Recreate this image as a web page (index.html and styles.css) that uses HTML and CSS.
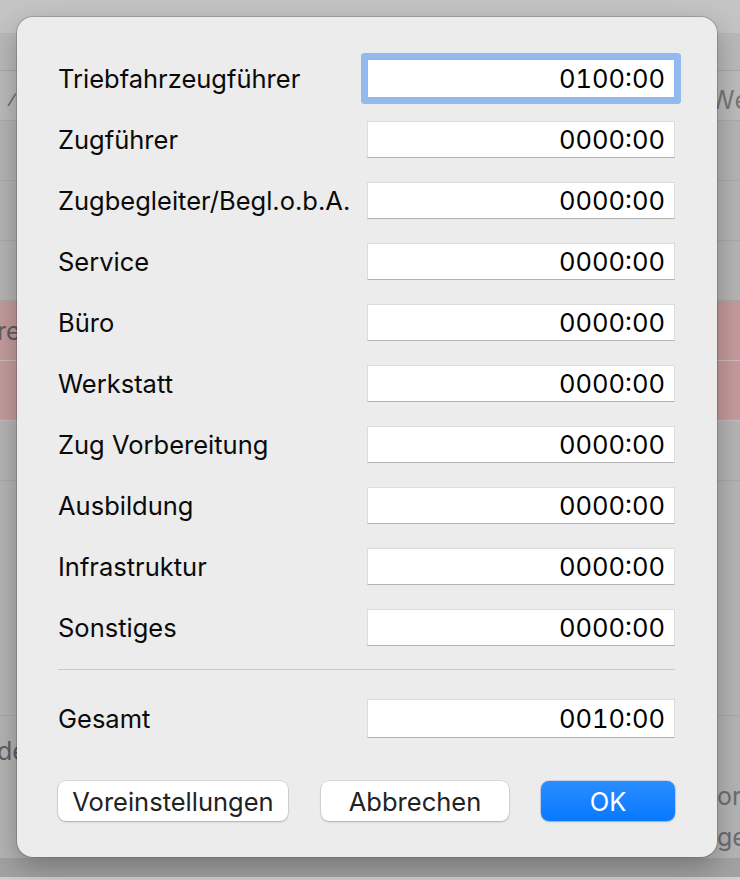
FILE: index.html
```html
<!DOCTYPE html>
<html lang="de">
<head>
<meta charset="utf-8">
<title>Zeiten</title>
<link rel="stylesheet" href="styles.css">
</head>
<body>
<div class="backdrop">
  <div class="bd-top"></div>
  <div class="bd-bar"></div>
  <div class="bd-head"><span class="bd-slash">∕</span><span class="bd-we">Wert</span></div>
  <div class="bd-row"></div>
  <div class="bd-row"></div>
  <div class="bd-row"></div>
  <div class="bd-row red"><span class="bd-left">re</span></div>
  <div class="bd-row red"></div>
  <div class="bd-row"></div>
  <div class="bd-fill"></div>
  <div class="bd-bottom">
    <div class="bd-line bd-l1"><span class="bd-left">de</span></div>
    <div class="bd-line bd-l2"><span class="bd-right">orm</span></div>
    <div class="bd-line bd-l3"><span class="bd-right">ge</span></div>
  </div>
  <div class="bd-foot"></div>
  <div class="bd-last"></div>
</div>

<div class="sheet">
  <div class="form">
    <div class="label">Triebfahrzeugführer</div>
    <div class="field focused">0100:00</div>
    <div class="label">Zugführer</div>
    <div class="field">0000:00</div>
    <div class="label">Zugbegleiter/Begl.o.b.A.</div>
    <div class="field">0000:00</div>
    <div class="label">Service</div>
    <div class="field">0000:00</div>
    <div class="label">Büro</div>
    <div class="field">0000:00</div>
    <div class="label">Werkstatt</div>
    <div class="field">0000:00</div>
    <div class="label">Zug Vorbereitung</div>
    <div class="field">0000:00</div>
    <div class="label">Ausbildung</div>
    <div class="field">0000:00</div>
    <div class="label">Infrastruktur</div>
    <div class="field">0000:00</div>
    <div class="label">Sonstiges</div>
    <div class="field">0000:00</div>
  </div>
  <div class="separator"></div>
  <div class="form total">
    <div class="label">Gesamt</div>
    <div class="field tall">0010:00</div>
  </div>
  <div class="buttons">
    <div class="btn btn-presets">Voreinstellungen</div>
    <div class="btn-group">
      <div class="btn btn-cancel">Abbrechen</div>
      <div class="btn btn-ok">OK</div>
    </div>
  </div>
</div>
</body>
</html>
```

FILE: styles.css
```css
* { box-sizing: border-box; }

html, body {
  margin: 0;
  padding: 0;
}

body {
  width: 740px;
  height: 880px;
  overflow: hidden;
  position: relative;
  font-family: Inter, "Noto Sans", "Liberation Sans", sans-serif;
  background: #b3b3b3;
}

/* ---------- backdrop window ---------- */
.backdrop {
  width: 740px;
  height: 880px;
  display: flex;
  flex-direction: column;
  background: #b4b4b4;
  color: #6a6a6a;
  font-size: 25px;
}

.bd-top { height: 33px; background: #c4c4c4; flex: none; }
.bd-bar { height: 38px; background: #b9b9b9; border-bottom: 1px solid #a9a9a9; flex: none; }
.bd-head {
  height: 50px;
  flex: none;
  background: #bbbbbb;
  border-bottom: 1px solid #aaaaaa;
  display: flex;
  justify-content: space-between;
  align-items: center;
  padding-top: 8px;
  overflow: hidden;
}
.bd-slash { margin-left: 11px; font-size: 18px; color: #555; }
.bd-we { margin-right: -30px; color: #777; letter-spacing: 1px; }

.bd-row {
  height: 60px;
  flex: none;
  border-bottom: 1px solid #a9a9a9;
  display: flex;
  align-items: center;
}
.bd-row.red {
  background: #c49b9c;
  border-bottom-color: #cbbcbc;
}
.bd-left { margin-left: -3px; color: #5f5f5f; }

.bd-fill { flex: 1; border-bottom: 1px solid #a8a8a8; }

.bd-bottom {
  height: 142px;
  flex: none;
  background: #b4b4b4;
  display: flex;
  flex-direction: column;
  overflow: hidden;
}
.bd-line { height: 30px; display: flex; align-items: center; }
.bd-l1 { margin-top: 20px; }
.bd-l2 { margin-top: 15px; }
.bd-l3 { margin-top: 11px; }
.bd-right { margin-left: 717px; color: #6d6d6d; white-space: nowrap; }

.bd-foot { height: 19px; flex: none; background: #a2a2a2; }
.bd-last { height: 3px; flex: none; background: #cfcfcf; }

/* ---------- sheet dialog ---------- */
.sheet {
  position: absolute;
  left: 17px;
  top: 17px;
  width: 700px;
  height: 840px;
  padding: 43px 42px 36px 41px;
  background: #ececec;
  border-radius: 16px;
  box-shadow: 0 0 0 1px rgba(0, 0, 0, 0.16), 0 10px 28px rgba(0, 0, 0, 0.28);
  display: flex;
  flex-direction: column;
  color: #111;
  font-size: 25.5px;
}

.form {
  display: grid;
  grid-template-columns: 1fr 308px;
  grid-auto-rows: 37px;
  row-gap: 24px;
  align-items: center;
}

.label {
  color: #0a0a0a;
  white-space: nowrap;
}

.field {
  height: 37px;
  background: #ffffff;
  border: 1px solid #dcdcdc;
  border-bottom-color: #b3b3b3;
  text-align: right;
  padding-right: 9px;
  display: flex;
  align-items: center;
  justify-content: flex-end;
  color: #000;
  font-variant-numeric: tabular-nums;
}

.field.focused {
  height: 39px;
  border-color: #8db6ee;
  border-radius: 1px;
  box-shadow: 0 0 0 6px #92baee;
}

.separator {
  margin-top: 23px;
  height: 1px;
  background: #c9c9c9;
  flex: none;
}

.total {
  margin-top: 29px;
  grid-auto-rows: 39px;
}
.field.tall { height: 39px; }

.buttons {
  margin-top: 43px;
  display: flex;
  justify-content: space-between;
  align-items: center;
}

.btn-group {
  display: flex;
  gap: 32px;
}

.btn {
  height: 40px;
  border-radius: 8px;
  background: #ffffff;
  color: #222;
  display: flex;
  align-items: center;
  justify-content: center;
  box-shadow: 0 0 0 0.5px rgba(0, 0, 0, 0.14), 0 1px 2px rgba(0, 0, 0, 0.22);
  white-space: nowrap;
}

.btn-presets { width: 230px; }
.btn-cancel { width: 188px; }
.btn-ok {
  width: 134px;
  color: #fff;
  background: linear-gradient(#2b8dff, #0878ff);
  box-shadow: 0 0 0 0.5px rgba(0, 80, 200, 0.3), 0 1px 2px rgba(0, 0, 0, 0.2);
}
```
